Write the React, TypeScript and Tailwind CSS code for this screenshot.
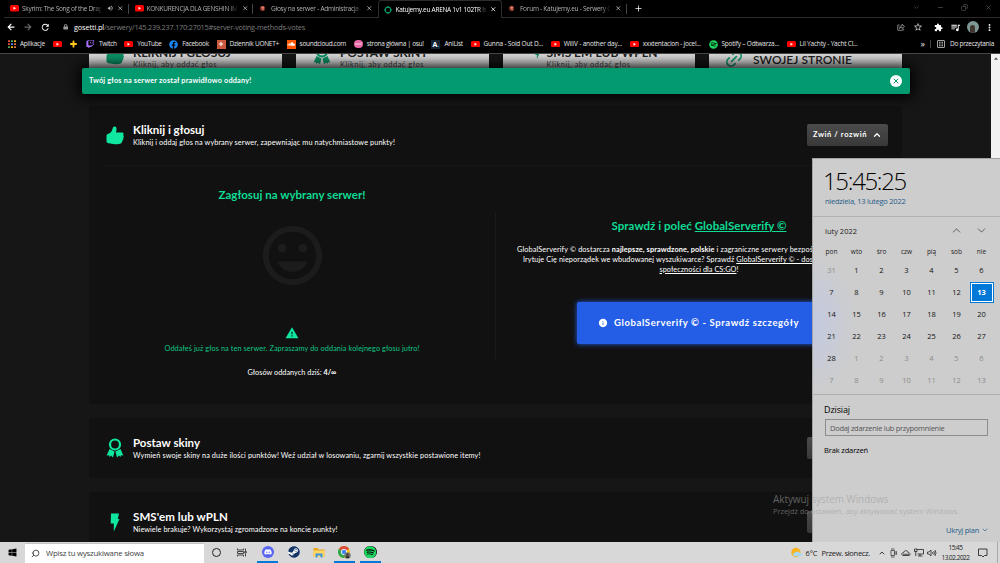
import { useLayoutEffect, useRef } from "react"
import type { ReactNode } from "react"
import clsx from "clsx"
import { FaArrowLeft, FaArrowRight, FaDiscord, FaFacebook, FaLock, FaSoundcloud, FaSpotify, FaSteam, FaTwitch, FaWindows } from "react-icons/fa"
import { MdExtension, MdInfo, MdOutlineStarBorder, MdQueueMusic, MdRefresh, MdTagFaces, MdVolumeUp, MdWarning } from "react-icons/md"
import { ChevronDown, ChevronUp, Copy, Link2, Minus, MoreVertical, Plus, Search, X } from "lucide-react"

type FitProps = { w: number; className?: string; children: ReactNode }

// one line of text, letter spacing adjusted so it takes exactly w pixels
const Fit = ({ w, className, children }: FitProps) => {
  const ref = useRef<HTMLSpanElement>(null)

  useLayoutEffect(() => {
    const el = ref.current
    if (!el) return
    el.style.letterSpacing = "0px"
    const len = el.textContent?.length || 1
    el.style.letterSpacing = `${(w - el.getBoundingClientRect().width) / len}px`
  }, [w])

  return <span ref={ref} className={clsx("inline-block shrink-0 whitespace-nowrap", className)}>{children}</span>
}

/* ICONS */
const YouTube = () => (
  <svg viewBox="0 0 18 13" className="w-[9px] h-[6.5px] shrink-0">
    <rect width="18" height="13" rx="3" fill="#f00" />
    <path d="M7 3.5v6l5-3z" fill="#fff" />
  </svg>
)

const Thumb = () => (
  <svg viewBox="0 0 18 19" className="w-[18px] h-[19px]" fill="#0fe7a0">
    <path d="M.5 9.8c0-1.200.8-1.900 2-2.100C4.800 7 6.200 4.800 6.600 2.400 6.800 1.100 7.600.300 8.700.400c1.500.2 2.100 1.600 1.800 3.400-.1 1-.4 2-.5 2.600h5.900c1 0 1.700.7 1.700 1.600 0 .5-.1.900-.4 1.200.5.400.7.900.6 1.500 0 .6-.2 1-.6 1.400.2.500.2 1 0 1.500-.2.500-.5.800-.9 1.100 0 2-1.200 3-3.600 3.400-2.500.4-5.500.3-8.400-.5C1.500 16.900.5 16.500.5 15.200z" />
  </svg>
)

const Ribbon = () => (
  <svg viewBox="0 0 18 20" className="w-[18px] h-[20px]">
    <circle cx="9" cy="6.500" r="5" fill="none" stroke="#0fe7a0" strokeWidth="2.200" />
    <path d="M3.500 11 8.500 13.500 7 19.500l-2-2L3.500 19 3 17.200.7 17.500zM14.500 11l-5 2.500L11 19.500l2-2 1.500 1.500.5-1.800 2.300.3z" fill="#0fe7a0" />
  </svg>
)

const Bolt = () => (
  <svg viewBox="0 0 10 19" className="w-[10px] h-[19px]" fill="#0fe7a0">
    <path d="M1 .5h8L7.800 6h1.700L3.800 18.500V10.500H.700z" />
  </svg>
)

const Chrome = () => (
  <svg viewBox="0 0 26 26" className="size-[13px]">
    <circle cx="12" cy="12" r="12" fill="#fbc116" />
    <path d="M12 12 1.600 6A12 12 0 0 1 22.400 6z" fill="#dd4b3e" />
    <path d="M12 12 1.600 6A12 12 0 0 0 12 24l5-9z" fill="#2da94f" />
    <circle cx="12" cy="12" r="6" fill="#fff" />
    <circle cx="12" cy="12" r="4.500" fill="#4285f4" />
    <circle cx="19" cy="19" r="6.500" fill="#777a72" />
    <path d="M15.500 24c0-6 7-6 7 0z" fill="#33302c" />
    <circle cx="19" cy="17.500" r="2.500" fill="#4a3a33" />
  </svg>
)

const Folder = () => (
  <svg viewBox="0 0 24 22" className="w-[12px] h-[11px]">
    <path d="M1 2h8l2 3h12v15H1z" fill="#e9a91c" />
    <path d="M1 7h22v13H1z" fill="#ffd766" />
    <path d="M5 13h14v8h-4v-4H9v4H5z" fill="#3a96dd" />
  </svg>
)

const Splat = () => (
  <svg viewBox="0 0 14 14" className="size-[7px] shrink-0">
    <circle cx="7" cy="7" r="5.500" fill="#6e2a20" />
    <path d="M4 4.500 8 2l3 3-2 2 1 4-4-2z" fill="#dd7d66" />
  </svg>
)

const Gosetti = () => (
  <svg viewBox="0 0 16 16" className="size-[8px] shrink-0">
    <circle cx="8" cy="8" r="5.700" fill="none" stroke="#0b9c6f" strokeWidth="2.200" />
    <path d="M8 0v3M8 13v3M0 8h3M13 8h3" stroke="#0b9c6f" strokeWidth="2" />
  </svg>
)

/* BROWSER */
const tabs = [
  { icon: <YouTube />, title: "Skyrim: The Song of the Drag", w: 80, sound: true },
  { icon: <YouTube />, title: "KONKURENCJA DLA GENSHIN IM", w: 91 },
  { icon: <Splat />, title: "Głosy na serwer - Administracja -", w: 91 },
  { icon: <Gosetti />, title: "Katujemy.eu ARENA 1v1 102TR !s", w: 91, active: true },
  { icon: <Splat />, title: "Forum - Katujemy.eu - Serwery C", w: 91 },
]

const TabBar = () => (
  <div className="flex h-[18px] pl-1 bg-black">
    {tabs.map((tab, i) => (
      <div
        key={tab.title}
        className={clsx(
          "flex items-center h-[18px] w-[124.5px] pr-[4px] border-[#2c2c2c]",
          tab.active ? "border border-b-0 rounded-t-[3px] pl-[5px]" : "border-b pl-[6px]"
        )}
      >
        <div className="w-[12px] flex justify-start">{tab.icon}</div>
        <div className={clsx("flex leading-[12px] text-[6.500px] mask-r-from-90%", tab.sound ? "w-[80px]" : "w-[91px]", tab.active ? "text-white" : "text-[#b0b0b0]")}>
          <Fit w={tab.w}>{tab.title}</Fit>
        </div>
        {tab.sound && <MdVolumeUp size={6.5} className="ml-[5px] text-[#b5b5b5]" />}
        <X size={6.5} strokeWidth={3} className={clsx("ml-auto", tab.active ? "text-white" : "text-[#b5b5b5]")} />
        <div className={clsx("w-px h-[10px] ml-[4px] -mr-[4px]", (i < 2 || i === 4) && "bg-[#444]")} />
      </div>
    ))}
    <div className="flex flex-1 items-center border-b border-[#2c2c2c] pl-[7px] pr-[8px] text-white">
      <Plus size={9} strokeWidth={2} />
      <div className="ml-auto mb-[3px] flex items-center gap-[17px] text-[#666]">
        <ChevronDown size={7} />
        <Minus size={7} />
        <Copy size={7} className="-scale-x-100" />
        <X size={7} />
      </div>
    </div>
  </div>
)

const AddressBar = () => (
  <div className="flex items-center h-[19px] pl-[7px] pr-[6px] pb-px bg-black text-white">
    <FaArrowLeft size={8} />
    <FaArrowRight size={8} className="ml-[9px] text-[#666]" />
    <MdRefresh size={10.5} className="ml-[7.500px]" />
    <FaLock size={5.5} className="ml-[12.500px] text-[#999]" />
    <div className="ml-[6px] leading-[12px] text-[7.300px]">
      <Fit w={30}>gosetti.pl</Fit>
      <Fit w={201} className="text-[#7c7c7c]">/serwery/145.239.237.170:27015#server-voting-methods-votes</Fit>
    </div>
    <div className="ml-auto flex items-center">
      <svg viewBox="0 0 16 16" className="size-[8px]" fill="none" stroke="#aaa" strokeWidth="1.500">
        <path d="M5 4H1.500v10.500h11V11M5 11c0-4 2-5.500 5-5.500V2.500L15 7l-5 4V8.500C8 8.500 6.500 9 5 11z" />
      </svg>
      <MdOutlineStarBorder size={10} className="ml-[8px] text-[#ccc]" />
      <MdExtension size={9} className="ml-[11px]" />
      <MdQueueMusic size={11} className="ml-[7px]" />
      <div className="ml-[6px] size-[12px] rounded-full overflow-hidden bg-[#7d9894] flex justify-center">
        <div className="mt-[4px] w-[5px] h-[9px] rounded-full bg-[#40352f]" />
      </div>
      <MoreVertical size={9} strokeWidth={3} className="ml-[6.500px]" />
    </div>
  </div>
)

const AppsGrid = () => (
  <svg viewBox="0 0 16 16" className="size-[8px] shrink-0">
    <path d="M0 2h4M0 8h4" stroke="#e04a3f" strokeWidth="3.500" />
    <path d="M6 2h4M0 14h4" stroke="#45a85a" strokeWidth="3.500" />
    <path d="M12 2h4M6 14h4" stroke="#e8b22b" strokeWidth="3.500" />
    <path d="M6 8h4" stroke="#4285f4" strokeWidth="3.500" />
    <path d="M12 8h4M12 14h4" stroke="#e06c3f" strokeWidth="3.500" />
  </svg>
)

const bookmarks = [
  { icon: <AppsGrid />, title: "Aplikacje", w: 25 },
  { icon: <YouTube /> },
  { icon: <Plus size={10} strokeWidth={5} className="text-[#ffc81e]" /> },
  { icon: <FaTwitch size={8.5} className="text-[#a970ff]" />, title: "Twitch", w: 17.5 },
  { icon: <YouTube />, title: "YouTube", w: 24.5 },
  { icon: <FaFacebook size={9} className="text-[#1b86f2]" />, title: "Facebook", w: 26.5 },
  { icon: <div className="size-[9px] bg-[#c9583c] p-[1.500px] text-white"><Plus size={6} strokeWidth={4} /></div>, title: "Dziennik UONET+", w: 49.5 },
  { icon: <div className="size-[9px] bg-[#f50] flex items-center justify-center"><FaSoundcloud size={8} className="text-white" /></div>, title: "soundcloud.com", w: 46.5 },
  { icon: <div className="size-[8.500px] rounded-full bg-[#e667a6] text-white text-[3.500px] leading-[8px] text-center">osu!</div>, title: "strona główna | osu!", w: 57 },
  { icon: <div className="size-[9px] bg-[#152232] text-white text-[7px] leading-[9px] font-bold text-center">A<span className="text-[#02a9ff]">.</span></div>, title: "AniList", w: 18.5 },
  { icon: <YouTube />, title: "Gunna - Sold Out D...", w: 59.5 },
  { icon: <YouTube />, title: "WillV - another day...", w: 58.5 },
  { icon: <YouTube />, title: "xxxtentacion - jocel...", w: 58 },
  { icon: <FaSpotify size={9} className="text-[#1ed760]" />, title: "Spotify – Odtwarza...", w: 57.5 },
  { icon: <YouTube />, title: "Lil Yachty - Yacht Cl...", w: 58 },
]

const Bookmarks = () => (
  <div className="flex items-center h-[17px] pl-[7px] pr-[6px] pb-[2px] bg-black border-b border-[#444] text-[#e6e6e6] text-[6.500px] leading-[12px]">
    <div className="flex items-center gap-[7.750px]">
      {bookmarks.map((b, i) => (
        <div key={i} className="flex items-center">
          <div className="w-[9px] flex justify-center">{b.icon}</div>
          {b.title && <Fit w={b.w} className="ml-[3.900px]">{b.title}</Fit>}
        </div>
      ))}
    </div>
    <div className="ml-auto flex items-center">
      <span className="text-[9px] leading-[10px] mb-[1px]">»</span>
      <div className="w-px h-[8px] ml-[5px] bg-[#444]" />
      <svg viewBox="0 0 16 16" className="size-[8px] ml-[6px]" fill="none" stroke="#ccc" strokeWidth="1.600">
        <rect x="1" y="1" width="14" height="14" rx="1" />
        <path d="M4 4.500h3M9 4.500h3M4 8h3M9 8h3M4 11.500h3M9 11.500h3" strokeWidth="2" />
      </svg>
      <Fit w={44} className="ml-[5px]">Do przeczytania</Fit>
    </div>
  </div>
)

/* PAGE */
const TopText = ({ title, w }: { title: string; w: number }) => (
  <div className="flex flex-col -mt-[9px]">
    <Fit w={w} className="h-[15px] leading-[15px] text-[12px] font-bold self-start">{title}</Fit>
    <Fit w={84} className="h-[10px] leading-[10px] text-[7.500px] text-[#444] self-start">Kliknij, aby oddać głos</Fit>
  </div>
)

const TopCards = () => (
  <div className="flex gap-[14px] h-[15px] pl-[89px] overflow-hidden text-[#222]">
    <div className="flex w-[193px] h-[15px] overflow-hidden bg-[#dedede]">
      <div className="w-[44px] flex justify-center items-end h-[11px] pl-[8px] brightness-65"><Thumb /></div>
      <TopText title="KLIKNIJ I GŁOSUJ" w={98} />
    </div>
    <div className="flex w-[192.500px] h-[15px] overflow-hidden bg-[#dedede]">
      <div className="w-[44px] flex justify-center items-end h-[11px] pl-[7px] brightness-65"><Ribbon /></div>
      <TopText title="POSTAW SKINY" w={88} />
    </div>
    <div className="flex w-[192.500px] h-[15px] overflow-hidden bg-[#dedede]">
      <div className="w-[44px] flex justify-center items-end h-[10px] pl-[32px] pr-[7px] brightness-65"><Bolt /></div>
      <TopText title="SMS'EM LUB WPLN" w={111} />
    </div>
    <div className="flex w-[192.500px] h-[15px] overflow-hidden bg-[#dedede]">
      <div className="w-[44px] flex justify-center items-center h-[9px] pl-[5px] text-[#0c9a6e]">
        <Link2 size={20} strokeWidth={2} className="-rotate-45 shrink-0" />
      </div>
      <Fit w={99} className="h-[11px] leading-[11px] text-[12px] font-semibold">SWOJEJ STRONIE</Fit>
    </div>
  </div>
)

type HeaderProps = { icon: ReactNode; title: string; tw: number; text: string; w: number }

const CardHeader = ({ icon, title, tw, text, w }: HeaderProps) => (
  <div className="flex items-center h-[59px] pl-[16px] pr-[14px] pb-px">
    <div className="w-[20px] mr-[8px] flex justify-center">{icon}</div>
    <div className="flex flex-col items-start text-white">
      <Fit w={tw} className="leading-[14px] text-[11.500px] font-bold">{title}</Fit>
      <Fit w={w} className="leading-[12px] -mb-[2px] text-[7.300px]">{text}</Fit>
    </div>
    <div className="ml-auto flex items-center justify-center gap-[6px] w-[81px] h-[22px] rounded-[2px] bg-linear-to-b from-[#4b4b4b] to-[#393939] text-white">
      <Fit w={54} className="text-[7.500px] leading-[12px] font-bold">Zwiń / rozwiń</Fit>
      <ChevronUp size={10} strokeWidth={3} className="-ml-px" />
    </div>
  </div>
)

const VoteCard = () => (
  <div className="h-[298px] rounded-[3px] bg-[#111]">
    <CardHeader icon={<Thumb />} title="Kliknij i głosuj" tw={71.5} text="Kliknij i oddaj głos na wybrany serwer, zapewniając mu natychmiastowe punkty!" w={262} />
    <div className="mx-[14px] h-px bg-[#171717]" />
    <div className="flex h-[238px]">
      <div className="w-[406px] flex flex-col items-center pt-[20.500px]">
        <Fit w={147} className="leading-[16px] text-[11.500px] font-bold text-[#0edc94]">Zagłosuj na wybrany serwer!</Fit>
        <MdTagFaces size={71} className="mt-[17px] text-[#1c1c1c]" />
        <MdWarning size={14} className="mt-[35px] text-[#0fe7a0]" />
        <Fit w={255} className="mt-[4px] leading-[10px] text-[7.300px] text-[#0ec686]">Oddałeś już głos na ten serwer. Zapraszamy do oddania kolejnego głosu jutro!</Fit>
        <Fit w={89} className="mt-[14px] leading-[10px] text-[7.300px] text-white">Głosów oddanych dziś: <b>4/∞</b></Fit>
      </div>
      <div className="w-px h-[147px] mt-[46px] bg-[#1b1b1b]" />
      <div className="w-[406px] flex flex-col items-center pt-[52px] text-white">
        <Fit w={175} className="leading-[16px] text-[11.500px] font-bold text-[#0edc94]">Sprawdź i poleć <u>GlobalServerify ©</u></Fit>
        <div className="self-stretch mt-[11px] flex flex-col leading-[9.800px] text-[7.300px]">
          <Fit w={296} className="self-start ml-[21px]">GlobalServerify © dostarcza <b>najlepsze, sprawdzone, polskie</b> i zagraniczne serwery bezpoś</Fit>
          <Fit w={290} className="self-start ml-[27px]">Irytuje Cię nieporządek we wbudowanej wyszukiwarce? Sprawdź <u>GlobalServerify © - dos</u></Fit>
          <Fit w={79} className="self-center"><u>społeczności dla CS:GO</u>!</Fit>
        </div>
        <div className="mt-[28px] flex items-center justify-center gap-[6px] w-[244px] h-[42px] pr-[1px] rounded-[2px] bg-[#245ee6] shadow-[0_0_5px_#245ee6]">
          <MdInfo size={10} />
          <Fit w={185} className="leading-[14px] text-[9.500px] font-bold">GlobalServerify © - Sprawdź szczegóły</Fit>
        </div>
      </div>
    </div>
  </div>
)

const Alert = () => (
  <div className="absolute left-[82px] top-[14px] flex items-center w-[828px] h-[26px] pl-[7px] pr-[8px] rounded-[2px] bg-[#039a70] shadow-[0_0_14px_3px_#000] text-white">
    <Fit w={162.5} className="leading-[12px] text-[7.300px] font-bold">Twój głos na serwer został prawidłowo oddany!</Fit>
    <div className="ml-auto size-[12px] rounded-full bg-white flex items-center justify-center text-[#039a70]">
      <X size={8} strokeWidth={3} />
    </div>
  </div>
)

const Page = () => (
  <div className="relative flex h-[488px] overflow-hidden bg-[#161616] font-['Lato',sans-serif]">
    <div className="flex-1">
      <TopCards />
      <div className="flex flex-col gap-[14px] w-[813px] ml-[89px] mt-[37px]">
        <VoteCard />
        <div className="rounded-[3px] bg-[#111] pt-px">
          <CardHeader icon={<Ribbon />} title="Postaw skiny" tw={67} text="Wymień swoje skiny na duże ilości punktów! Weź udział w losowaniu, zgarnij wszystkie postawione itemy!" w={347.5} />
        </div>
        <div className="rounded-[3px] bg-[#111] pt-px">
          <CardHeader icon={<Bolt />} title="SMS'em lub wPLN" tw={95} text="Niewiele brakuje? Wykorzystaj zgromadzone na koncie punkty!" w={204.5} />
        </div>
      </div>
    </div>
    <div className="w-[9px] bg-[#f1f1f1] flex justify-center pt-[3px]">
      <svg viewBox="0 0 6 4" className="w-[4px] h-[3px]"><path d="M0 4 3 0l3 4z" fill="#555" /></svg>
    </div>
    <Alert />
  </div>
)

/* WINDOWS CALENDAR */
const weekdays = ["pon", "wto", "śro", "czw", "pią", "sob", "nie"]
const days = [31, ...Array.from({ length: 28 }, (_, i) => i + 1), ...Array.from({ length: 13 }, (_, i) => i + 1)]

const Calendar = () => (
  <div className="absolute left-[812px] top-[158px] w-[188px] h-[384px] border-t border-l border-[#a3a3a3] bg-[#cdcdcd] bg-[radial-gradient(ellipse_45px_70px_at_0px_165px,#c3cae0,transparent)] text-[#222]">
    <div className="flex flex-col items-start h-[58px] pl-[12px] pt-[7px] border-b border-[#b2b2b2]">
      <Fit w={83} className="-ml-[2px] h-[30px] leading-[29px] text-[24px] font-light text-black">15:45:25</Fit>
      <Fit w={80.5} className="leading-[10px] text-[7.500px] text-[#1d5c88]">niedziela, 13 lutego 2022</Fit>
    </div>
    <div className="flex items-center h-[28px] pl-[12px] pr-[12px] pb-px">
      <Fit w={32} className="text-[7.500px] leading-[10px]">luty 2022</Fit>
      <ChevronUp size={13} strokeWidth={1.500} className="ml-auto text-[#444]" />
      <ChevronDown size={13} strokeWidth={1.500} className="ml-[12px] text-[#444]" />
    </div>
    <div className="grid grid-cols-7 w-[175px] ml-[6px] text-center">
      {weekdays.map((d) => (
        <div key={d} className="h-[15px] leading-[13px] text-[6.500px]">{d}</div>
      ))}
      {days.map((d, i) => (
        <div
          key={i}
          className={clsx(
            "h-[21.900px] flex items-center justify-center text-[7.500px] leading-none",
            (i === 0 || i > 28) ? "text-[#8b8b8b]" : "text-[#111]"
          )}
        >
          {i === 13 ? (
            <div className="flex items-center justify-center w-[24px] h-[21px] shrink-0 border border-[#0078d7] bg-white p-[1px]">
              <div className="flex items-center justify-center size-full bg-[#0078d7] font-bold text-white">{d}</div>
            </div>
          ) : d}
        </div>
      ))}
    </div>
    <div className="mt-[3px] border-t border-[#b0b0b0] pl-[12px] pt-[8px] flex flex-col items-start">
      <Fit w={26} className="-ml-px leading-[13px] text-[9px] text-black">Dzisiaj</Fit>
      <div className="mt-[3px] flex items-center w-[163px] h-[17px] pl-[4px] border border-[#8c8c8c]">
        <Fit w={114.5} className="leading-[10px] text-[7.500px] text-[#555]">Dodaj zdarzenie lub przypomnienie</Fit>
      </div>
      <Fit w={44} className="-ml-px mt-[8px] leading-[12px] text-[7.500px] text-black">Brak zdarzeń</Fit>
    </div>
    <div className="mt-[68px] mr-[11px] flex items-center justify-end gap-[2px] text-[#1d5c88]">
      <Fit w={33} className="leading-[12px] text-[7.500px]">Ukryj plan</Fit>
      <ChevronDown size={8} />
    </div>
  </div>
)

const Watermark = () => (
  <div className="absolute left-[773px] top-[493px] flex flex-col items-start text-[#9c9c9c]/60">
    <Fit w={115.5} className="leading-[12px] text-[10px]">Aktywuj system Windows</Fit>
    <Fit w={186} className="leading-[12px] text-[7.500px]">Przejdź do ustawień, aby aktywować system Windows.</Fit>
  </div>
)

/* TASKBAR */
const TaskIcon = ({ open, children }: { open?: boolean; children: ReactNode }) => (
  <div className={clsx("flex items-center justify-center w-[21px] h-[21px] mx-[2.300px] border-b-2 pt-[1px]", open ? "border-[#0078d7]" : "border-transparent")}>
    {children}
  </div>
)

const Tray = () => (
  <div className="flex items-center ml-[8px] gap-[3px]">
    <ChevronUp size={8} strokeWidth={2.5} />
    <svg viewBox="0 0 18 20" className="w-[9px] h-[10px]" fill="none" stroke="#333" strokeWidth="1.500">
      <path d="M4 5h7v10H4zM4 2h7M4 18h7M11 9l4-2v6l-4-2" />
    </svg>
    <svg viewBox="0 0 20 16" className="w-[10px] h-[8px]" fill="none" stroke="#222" strokeWidth="1.600">
      <path d="M4 13C0 12 1 7 5 7.500 6 2 14 2 14.500 7.500 19 7 19 13 16 13zM4 10.500h12" />
    </svg>
    <svg viewBox="0 0 20 18" className="w-[10px] h-[9px]" fill="none" stroke="#222" strokeWidth="1.600">
      <path d="M6 3h13v9H7M12 12v4M8 16h9M3.500 7v9M1 2h5v5H1z" />
    </svg>
    <svg viewBox="0 0 20 20" className="size-[10px]" fill="none" stroke="#222" strokeWidth="1.500">
      <path d="M1 8h3l4-4v12l-4-4H1zM11 8q1.500 2 0 4M13.500 6q3 4 0 8M16 4q4 6 0 12" />
    </svg>
  </div>
)

const Taskbar = () => (
  <div className="flex items-center h-[21px] bg-[#d8d8d8] text-[#222]">
    <div className="w-[25px] flex justify-center"><FaWindows size={9} className="text-black" /></div>
    <div className="flex items-center w-[179px] h-[20px] pl-[6px] border-t border-[#c4c4c4] bg-white">
      <Search size={9} strokeWidth={2} className="-scale-x-100" />
      <Fit w={98} className="ml-[6px] leading-[12px] text-[7.800px] text-[#444]">Wpisz tu wyszukiwane słowa</Fit>
    </div>
    <div className="flex">
      <TaskIcon><div className="size-[9px] rounded-full border-[1.500px] border-[#222]" /></TaskIcon>
      <TaskIcon>
        <svg viewBox="0 0 20 18" className="w-[10px] h-[9px]" fill="none" stroke="#222" strokeWidth="1.600">
          <path d="M1 1v3h12V1M1 17v-3h12v3M1 7h12v4H1zM17 1v5M17 11v6M15.500 7h3v3h-3z" />
        </svg>
      </TaskIcon>
      <TaskIcon open><div className="size-[12.500px] rounded-full bg-[#5865f2] flex items-center justify-center"><FaDiscord size={8} className="text-white" /></div></TaskIcon>
      <TaskIcon><div className="size-[12px] rounded-full bg-white"><FaSteam size={12} className="text-[#123467]" /></div></TaskIcon>
      <TaskIcon><Folder /></TaskIcon>
      <TaskIcon open><Chrome /></TaskIcon>
      <TaskIcon open><div className="rounded-full bg-black"><FaSpotify size={12.5} className="text-[#1ed760]" /></div></TaskIcon>
    </div>
    <div className="ml-auto flex items-center">
      <svg viewBox="0 0 20 20" className="size-[11px]">
        <circle cx="9" cy="10" r="8.500" fill="#fbb21c" />
        <path d="M7 17a3.500 3.500 0 0 1 1-7 4.500 4.500 0 0 1 8 1 3 3 0 0 1 1 6H9z" fill="#a9d8f5" />
      </svg>
      <Fit w={12} className="ml-[4px] text-[7.500px] leading-[12px]">6°C</Fit>
      <Fit w={48.5} className="ml-[4px] text-[7.500px] leading-[12px]">Przew. słonecz.</Fit>
      <Tray />
      <div className="flex flex-col items-center w-[29px] ml-[4px] text-[6.500px] leading-[9.500px]">
        <Fit w={14}>15:45</Fit>
        <Fit w={28}>13.02.2022</Fit>
      </div>
      <svg viewBox="0 0 20 20" className="size-[10px] ml-[8px]" fill="none" stroke="#222" strokeWidth="1.700">
        <path d="M1 2h17v13h-5l-3 3-3-3H1z" />
      </svg>
      <div className="w-px h-[21px] ml-[9px] mr-[2px] bg-[#aaa]" />
    </div>
  </div>
)

const App = () => {
  return (
    <div className="relative w-[1000px] h-[563px] overflow-hidden bg-black font-['Open_Sans',sans-serif]">
      <TabBar />
      <AddressBar />
      <Bookmarks />
      <Page />
      <Taskbar />
      <Calendar />
      <Watermark />
    </div>
  )
}

export default App
